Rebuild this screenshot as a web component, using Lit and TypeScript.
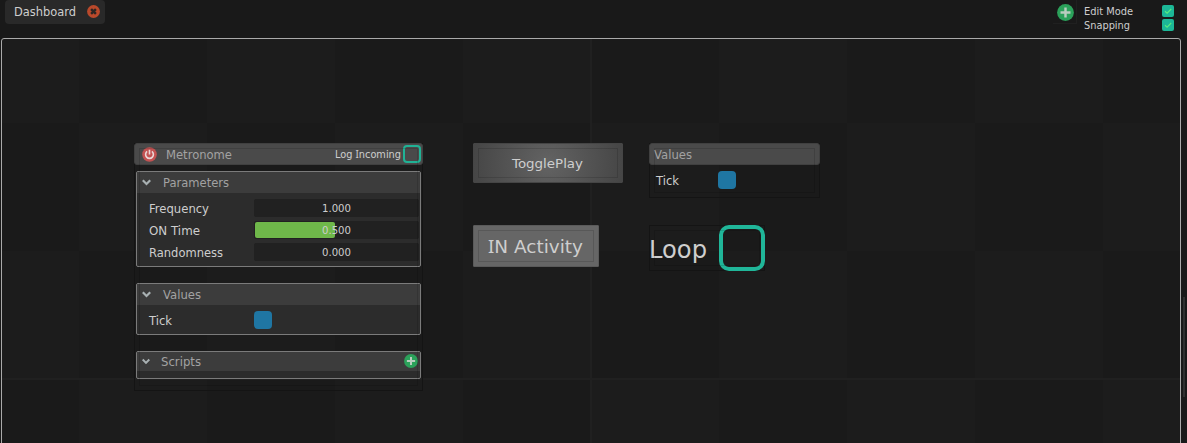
import { LitElement, html, svg, css } from "lit";
import { customElement } from "lit/decorators.js";

// A capital I is set in a face that gives it serifs.
const glyphs = (text: string) =>
  text.split(/(I)/).filter((s) => s).map((s) => (s === "I" ? svg`<tspan class="serifed">I</tspan>` : s));

// Single-line label squeezed to an exact advance width; base is the baseline inside its row.
const label = (text: string, width: number, height: number, base: number, cls = "") => html`
  <svg class="label ${cls}" width=${width} height=${height}>
    <text x="0" y=${base} textLength=${width} lengthAdjust="spacingAndGlyphs">${glyphs(text)}</text>
  </svg>`;

const addIcon = (size: number) => html`
  <svg class="icon" width=${size} height=${size} viewBox="0 0 16 16">
    <circle cx="8" cy="8" r="7.9" fill="#2ba15a"></circle>
    <path d="M8 3.3V12.7M3.3 8H12.7" stroke="#b9cdbf" stroke-width="2.3"></path>
  </svg>`;

const closeIcon = html`
  <svg class="icon" width="13" height="13" viewBox="0 0 13 13">
    <circle cx="6.5" cy="6.5" r="6.4" fill="#b9492b"></circle>
    <path d="M4.1 4.1L8.9 8.9M8.9 4.1L4.1 8.9" stroke="#2c2523" stroke-width="2.4"></path>
  </svg>`;

const powerIcon = html`
  <svg class="icon" width="15" height="15" viewBox="0 0 15 15">
    <circle cx="7.5" cy="7.5" r="7.3" fill="#c25252"></circle>
    <path d="M5.1 4.4A3.9 3.9 0 1 0 9.9 4.4M7.5 2.7V7.6" fill="none" stroke="#ead6d6" stroke-width="1.6"></path>
  </svg>`;

const chevron = (w: number) => html`
  <svg class="icon" width=${w} height="7" viewBox="0 0 9 7">
    <path d="M0.8 1.2L4.5 5L8.2 1.2" fill="none" stroke="#a9b1b3" stroke-width="2.2"></path>
  </svg>`;

const checkedBox = html`
  <svg class="icon" width="12" height="12" viewBox="0 0 12 12">
    <rect width="12" height="12" rx="2" fill="#1cb797"></rect>
    <path d="M3 6.2L5.1 8.2L9.2 4" fill="none" stroke="#58ea80" stroke-width="1.2"></path>
  </svg>`;

@customElement("app-root")
export class AppRoot extends LitElement {
  static styles = css`
    :host {
      display: flex; flex-direction: column; position: relative;
      width: 1187px; height: 443px; overflow: hidden; background: #191919;
      font-family: "DejaVu Sans", sans-serif; font-size: 12px;
    }
    * { box-sizing: border-box; }
    svg { display: block; flex: none; }
    .label { overflow: visible; fill: #cecece; font-size: 12px; }
    .serifed { font-family: "Noto Sans", sans-serif; }
    .small { font-size: 11px; }
    .tiny { font-size: 10.5px; }
    .dim { fill: #a2a2a2; }
    .mid { font-size: 13px; }
    .big { font-size: 18px; }
    .huge { font-size: 25px; }
    .top { height: 38px; display: flex; justify-content: space-between; padding: 0 13px 0 5px; }
    .tab {
      width: 100px; height: 24px; display: flex; gap: 12px; padding: 0 0 0 9px;
      background: #292929; border-radius: 4px;
    }
    .tab .icon { margin-top: 5px; margin-left: -1px; }
    .tools { display: flex; }
    .add { width: 24px; height: 24px; padding: 4px 0 0 4px; border-right: 1px solid #202020; border-bottom: 1px solid #202020; }
    .options { display: flex; flex-direction: column; padding: 4px 0 0 7px; width: 97px; }
    .option { display: flex; justify-content: space-between; height: 14px; padding-top: 1px; }
    .main { display: flex; gap: 2px; padding-left: 1px; height: 405px; }
    .canvas {
      position: relative; width: 1180px; height: 412px; flex: none;
      border: 1px solid #aaa; border-radius: 3px;
      background: linear-gradient(#202020, #202020) 588px 0 / 2px 100% no-repeat,
        linear-gradient(#202020, #202020) 0 339px / 100% 2px no-repeat,
        repeating-conic-gradient(#1a1a1a 0 25%, #1c1c1c 0 50%) 77px 84px / 256px 256px;
    }
    .scroll { width: 2px; height: 100px; margin-top: 259px; background: #303030; }
    .item { position: absolute; border: 1px solid #141414; }
    .item::after {
      content: ""; position: absolute; inset: 4px; border: 1px solid rgba(0, 0, 0, 0.13); pointer-events: none;
    }
    .metronome { left: 132px; top: 104px; width: 289px; height: 248px; }
    .toggle { left: 471px; top: 104px; width: 150px; height: 40px; }
    .activity { left: 471px; top: 186px; width: 126px; height: 42px; }
    .values { left: 647px; top: 104px; width: 171px; height: 55px; }
    .loop { left: 647px; top: 186px; width: 116px; height: 46px; display: flex; justify-content: space-between; }
    .loop .label { margin-left: -1px; }
    .bar {
      display: flex; align-items: center; height: 22px; margin: -1px -1px 0;
      background: #4a4a4a; border: 1px solid #404040; border-radius: 3px;
    }
    .metronome .bar { padding: 0 1px 0 7px; }
    .metronome .bar .name { margin-left: 9px; margin-right: auto; }
    .values .bar { padding-left: 4px; }
    .check { border: 2px solid #20b295; border-radius: 4px; width: 18px; height: 18px; flex: none; margin: 0 0 0 2px; }
    .bigcheck { width: 46px; height: 46px; margin: -1px; border: 4px solid #20b699; border-radius: 10px; flex: none; }
    .groups { display: flex; flex-direction: column; gap: 16px; padding: 6px 1px 0; }
    .group { border: 1px solid #7b7b7b; border-radius: 2px; background: #2c2c2c; overflow: hidden; width: 285px; }
    .params { height: 96px; }
    .vals { height: 52px; }
    .scripts { height: 28px; }
    .head { display: flex; align-items: center; height: 21px; padding-left: 5px; gap: 12px; background: #3c3c3c; }
    .scripts .head { height: 19px; padding-left: 5px; padding-right: 2px; }
    .scripts .head .name { margin-right: auto; margin-left: -1px; }
    .scripts .head > .icon:last-child { margin-bottom: 1px; }
    .rows { display: flex; flex-direction: column; gap: 4px; padding: 6px 1px 0 12px; }
    .row { display: grid; grid-template-columns: 105px 1fr; height: 18px; }
    .track { display: grid; justify-items: center; background: #212121; border-radius: 2px; }
    .track > * { grid-area: 1 / 1; }
    .fill { justify-self: start; height: 16px; margin: 1px; border-radius: 2px; background: #6fb84a; }
    .led { width: 18px; height: 18px; border-radius: 4px; background: #1f76a3; }
    .vrow { display: grid; grid-template-columns: 62px 18px; padding: 6px 0 0 6px; }
    .toggle, .activity { display: flex; justify-content: center; border-color: #454545; border-radius: 1px; }
    .toggle .label, .activity .label { margin-left: -1px; }
    .toggle { background: radial-gradient(circle at 50% 50%, #636363, #464646 75px); }
    .activity { background: #666; border-color: #5a5a5a; }
  `;

  private params = [
    { name: "Frequency", width: 60, value: "1.000", fill: 0 },
    { name: "ON Time", width: 51, value: "0.500", fill: 80 },
    { name: "Randomness", width: 74, value: "0.000", fill: 0 },
  ];

  render() {
    return html`
      <div class="top">
        <div class="tab">${label("Dashboard", 62, 24, 16)}${closeIcon}</div>
        <div class="tools">
          <div class="add">${addIcon(17)}</div>
          <div class="options">
            <div class="option">${label("Edit Mode", 49, 12, 10, "small")}${checkedBox}</div>
            <div class="option">${label("Snapping", 46, 12, 10, "small")}${checkedBox}</div>
          </div>
        </div>
      </div>
      <div class="main">
        <div class="canvas">
          <div class="item metronome">
            <div class="bar">
              ${powerIcon}
              <div class="name">${label("Metronome", 66, 20, 15, "dim")}</div>
              ${label("Log Incoming", 66, 20, 14, "tiny")}
              <div class="check"></div>
            </div>
            <div class="groups">
              <div class="group params">
                <div class="head">${chevron(9)}${label("Parameters", 66, 20, 14, "dim")}</div>
                <div class="rows">
                  ${this.params.map((p) => html`
                    <div class="row">
                      ${label(p.name, p.width, 18, 14)}
                      <div class="track">
                        ${p.fill ? html`<div class="fill" style="width:${p.fill}px"></div>` : ""}
                        ${label(p.value, 29, 18, 13, "small")}
                      </div>
                    </div>`)}
                </div>
              </div>
              <div class="group vals">
                <div class="head">${chevron(9)}${label("Values", 38, 20, 14, "dim")}</div>
                <div class="rows">
                  <div class="row">${label("Tick", 23, 18, 14)}<div class="led"></div></div>
                </div>
              </div>
              <div class="group scripts">
                <div class="head">
                  ${chevron(8)}
                  <div class="name">${label("Scripts", 40, 19, 14, "dim")}</div>
                  ${addIcon(14)}
                </div>
              </div>
            </div>
          </div>
          <div class="item toggle">${label("TogglePlay", 71, 38, 24, "mid")}</div>
          <div class="item activity">${label("IN Activity", 95, 40, 27, "big")}</div>
          <div class="item values">
            <div class="bar">${label("Values", 38, 20, 15, "dim")}</div>
            <div class="vrow">${label("Tick", 23, 18, 14)}<div class="led"></div></div>
          </div>
          <div class="item loop">
            ${label("Loop", 58, 44, 32, "huge")}
            <div class="bigcheck"></div>
          </div>
        </div>
        <div class="scroll"></div>
      </div>
    `;
  }
}
